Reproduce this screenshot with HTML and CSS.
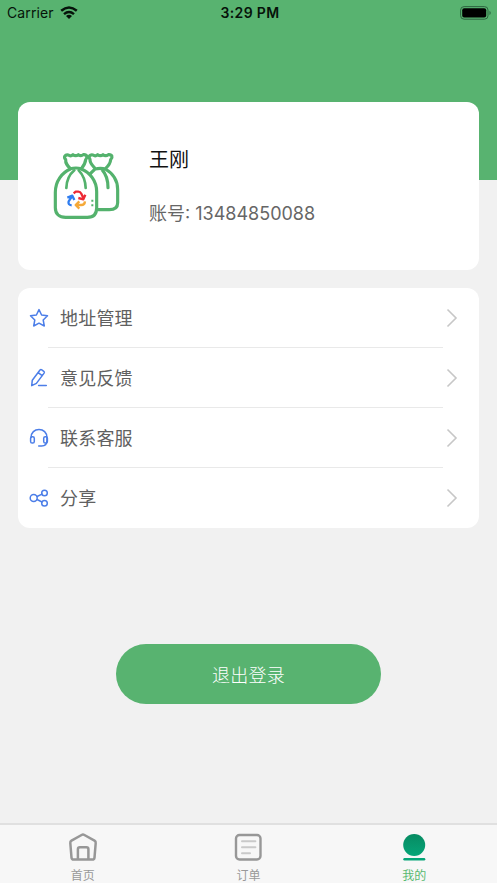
FILE: index.html
```
<!DOCTYPE html>
<html lang="zh-CN">
<head>
<meta charset="utf-8">
<title>我的</title>
<link rel="stylesheet" href="styles.css">
</head>
<body>
<div class="app">
  <header class="status">
    <div class="carrier"><span>Carrier</span>
      <svg class="wifi" width="18" height="13" viewBox="0 0 18 13"><g fill="none" stroke="#06130a" stroke-width="2.5"><path d="M1.2 4.8Q9-1.8 16.8 4.8"/><path d="M4 8.1Q9 4 14 8.1"/></g><path d="M6 10Q9 7.6 12 10L9 12.9Z" fill="#06130a"/></svg>
    </div>
    <span class="time">3:29 PM</span>
    <svg class="battery" width="32" height="14" viewBox="0 0 32 14"><rect x=".6" y=".6" width="27.4" height="12.6" rx="3.5" fill="none" stroke="#2d6540"/><rect x="2.2" y="2.2" width="24" height="9.4" rx="2" fill="#000"/><path d="M29.3 4.8Q31 5.5 31 6.9T29.3 9Z" fill="#367b4c"/></svg>
  </header>
  <main class="content">
    <section class="card profile">
      <svg class="avatar" width="72" height="72" viewBox="30 30 216 216" fill="none" stroke-linecap="round" stroke-linejoin="round">
        <g stroke="#54b26d" stroke-width="9.5">
          <path d="M166 86C157 75 149 70 150 58C144 49 150 43 159 45Q166 50 173 44Q181 50 189 44Q197 50 205 44C217 43 219 52 212 59C211 72 203 80 196 86M165 87Q181 83 197 87M196 87C222 102 233 121 233 149V188C233 203 223 209 208 209H175M164 88L151 101M186 89Q204 109 204 143"/>
          <path fill="#fff" d="M91 87C66 98 46 123 46 157V203C46 222 58 232 77 232H142C161 232 170 222 170 203V155C170 122 150 98 124 87"/>
          <path fill="#fff" d="M91 86C82 77 76 71 77 59C70 51 75 43 85 45Q92 50 99 44Q107 50 115 44Q123 50 130 44C142 43 143 52 137 59C136 72 130 79 124 86Q108 82 91 86Z"/>
          <path d="M103 91Q80 110 79 144M116 91Q136 111 137 144" stroke-width="8"/>
        </g>
        <g stroke-width="7" stroke-linecap="butt">
          <path stroke="#ed2934" d="M101 160L107 155H115Q121 155 124 161L130 174M115 174L130 178L136 164"/>
          <path stroke="#2f7df0" d="M95 196Q83 195 86 184L96 169M82 173L97 167L103 180"/>
          <path stroke="#f5a938" d="M107 195H124Q134 195 135 184M118 184L107 195L118 206"/>
        </g>
        <path d="M157 179V185M157 193V199" stroke="#54b26d" stroke-width="6" stroke-linecap="butt"/>
      </svg>
      <div class="info"><h1 class="name">王刚</h1><p class="account">账号: <span class="number">13484850088</span></p></div>
    </section>
    <nav class="card menu">
      <a class="row"><svg class="icon" viewBox="0 0 20 20"><path d="M10 1.6L12.6 7L18.5 7.8L14.2 12L15.3 18L10 15.2L4.7 18L5.8 12L1.5 7.8L7.4 7Z"/></svg><span class="label">地址管理</span><svg class="arrow" viewBox="0 0 12 20"><path d="M1.5 1.5L10 10L1.5 18.5"/></svg></a>
      <a class="row"><svg class="icon" viewBox="0 0 20 20"><path d="M2.7 17.7L3.3 12.2L11 2Q11.8 1.2 12.8 1.8L14.8 3.3Q15.8 4.1 15.1 5.1L7.4 15.4ZM9.1 4.6L13.2 7.7M9.6 17.4H17.3"/></svg><span class="label">意见反馈</span><svg class="arrow" viewBox="0 0 12 20"><path d="M1.5 1.5L10 10L1.5 18.5"/></svg></a>
      <a class="row"><svg class="icon" viewBox="0 0 20 20"><path d="M2.1 9.4C2.1 4.6 5.5 1.5 10 1.5S17.9 4.6 17.9 9.4V13C17.9 16.2 15.8 17.9 12.7 17.9H9.7"/><rect x="1.6" y="8.7" width="3.7" height="6.4" rx="1.6"/><rect x="14.7" y="8.7" width="3.7" height="6.4" rx="1.6"/></svg><span class="label">联系客服</span><svg class="arrow" viewBox="0 0 12 20"><path d="M1.5 1.5L10 10L1.5 18.5"/></svg></a>
      <a class="row"><svg class="icon" viewBox="0 0 20 20"><circle cx="4.7" cy="10" r="3.5"/><circle cx="15.5" cy="5" r="2.8"/><circle cx="15.5" cy="15.2" r="2.8"/><path d="M8 8.5L13 6.1M8 11.5L13 14"/></svg><span class="label">分享</span><svg class="arrow" viewBox="0 0 12 20"><path d="M1.5 1.5L10 10L1.5 18.5"/></svg></a>
    </nav>
    <button class="logout">退出登录</button>
  </main>
  <footer class="tabs">
    <a class="tab"><svg width="32" height="32" viewBox="0 0 32 32" fill="none" stroke="#979797" stroke-width="2.5" stroke-linejoin="round"><path d="M3.3 12Q3.1 10.5 4.5 9.6L14.6 4Q16 3.2 17.4 4L27.5 9.6Q28.9 10.5 28.7 12L27.5 26.6Q27.3 28.6 25.3 28.6H6.7Q4.7 28.6 4.5 26.6Z"/><path d="M10.9 28.5V18.2Q10.9 16.2 12.9 16.2H19.4Q21.4 16.2 21.4 18.2V28.5"/></svg><span>首页</span></a>
    <a class="tab"><svg width="32" height="32" viewBox="0 0 32 32" fill="none" stroke="#979797"><rect x="4" y="4" width="24.5" height="24.5" rx="3.5" stroke-width="2.4"/><path d="M10 10.2H23.4M10 16.2H23.4M10 22.2H18" stroke="#c9c9c9" stroke-width="2" stroke-linecap="round"/></svg><span>订单</span></a>
    <a class="tab active"><svg width="32" height="32" viewBox="0 0 32 32"><defs><linearGradient id="me" x2="0" y2="1"><stop stop-color="#078b62"/><stop offset="1" stop-color="#06a578"/></linearGradient></defs><circle cx="16.2" cy="14" r="11" fill="url(#me)"/><rect x="5.3" y="27" width="22" height="2.4" rx="1.2" fill="#06a578"/></svg><span>我的</span></a>
  </footer>
</div>
</body>
</html>
```
FILE: styles.css
```
* { box-sizing: border-box; }
body { margin: 0; font-family: Inter, "Noto Sans CJK SC", sans-serif; background: #f1f1f1; }
.app { height: 883px; display: flex; flex-direction: column; background: linear-gradient(#58b370 180px, #f1f1f1 180px); }
.status { height: 25px; display: grid; grid-template-columns: 1fr auto 1fr; align-items: center; padding: 0 5px 0 7px; color: #06130a; font-size: 14px; line-height: 25px; }
.carrier { display: flex; align-items: center; gap: 6px; letter-spacing: .1px; }
.wifi { margin-top: -1px; }
.time { font-weight: 600; font-size: 14px; letter-spacing: .35px; padding-left: 1px; }
.battery { justify-self: end; }
.content { flex: 1; display: flex; flex-direction: column; padding: 77px 18px 0; }
.card { background: #fff; border-radius: 12px; }
.profile { height: 168px; display: flex; align-items: flex-start; padding: 43px 32px 0; }
.avatar { margin-top: 5px; }
.info { margin-left: 27px; }
.name { margin: 0; font-size: 20px; font-weight: 400; line-height: 30px; color: #111; }
.account { margin: 25px 0 0; font-size: 18px; line-height: 28px; color: #666; white-space: nowrap; }
.menu { margin-top: 18px; height: 240px; }
.row { position: relative; height: 60px; display: flex; align-items: center; padding: 0 21px 0 11px; }
.row:not(:last-child)::after { content: ""; position: absolute; left: 30px; right: 36px; bottom: 0; height: 1px; background: #e9e9e9; }
.icon { width: 20px; height: 20px; fill: none; stroke: #4c7ee8; stroke-width: 1.5; stroke-linecap: round; stroke-linejoin: round; }
.label { flex: 1; margin-left: 11px; padding-top: 2px; font-size: 18px; line-height: 28px; letter-spacing: .2px; color: #606060; }
.arrow { width: 12px; height: 20px; fill: none; stroke: #c7c7c7; stroke-width: 1.6; }
.logout { width: 265px; height: 60px; margin: 116px auto 0; padding: 0; border: 0; border-radius: 30px; background: #58b370; color: #fff; font: 300 18px "Noto Sans CJK SC", sans-serif; letter-spacing: .2px; }
.tabs { height: 60px; display: grid; grid-template-columns: repeat(3, 1fr); background: #f7f7f7; border-top: 2px solid #e0e0e0; }
.tab { display: flex; flex-direction: column; align-items: center; padding-top: 6px; color: #999; font-size: 12px; line-height: 18px; }
.tab span { margin-top: 4px; }
.tab.active { color: #58b96f; }
```
